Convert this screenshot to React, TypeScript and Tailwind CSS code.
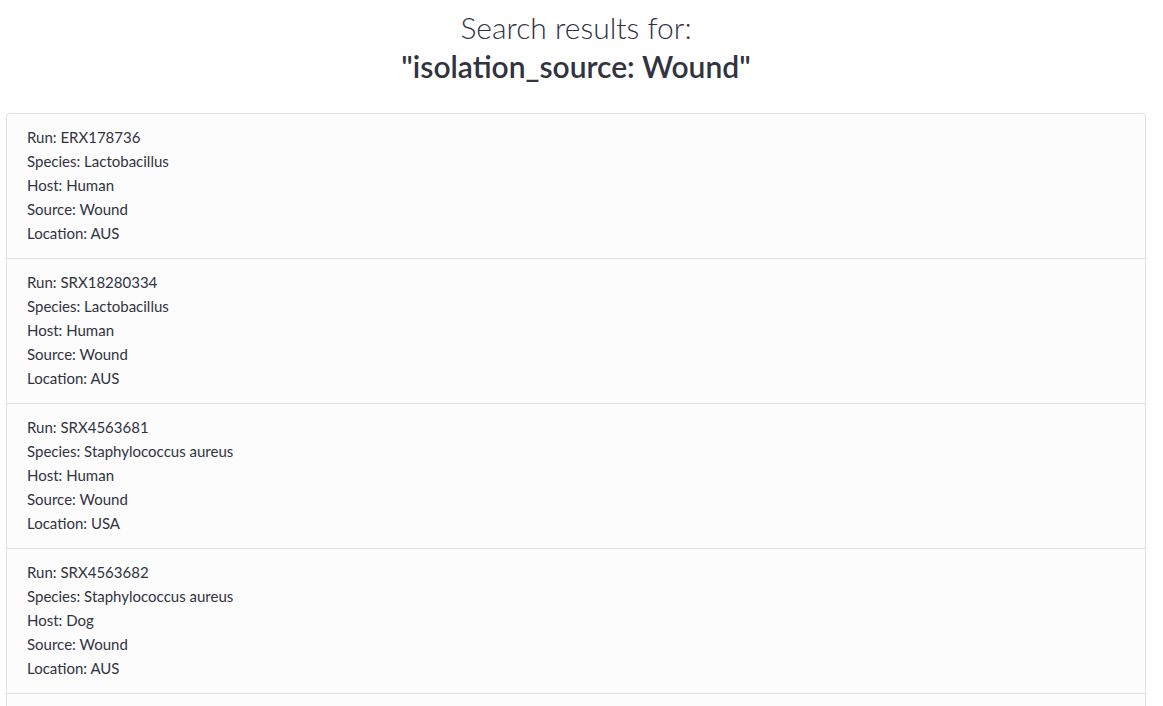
import React from 'react';

const results = [
  { run: 'ERX178736', species: 'Lactobacillus', host: 'Human', source: 'Wound', location: 'AUS' },
  { run: 'SRX18280334', species: 'Lactobacillus', host: 'Human', source: 'Wound', location: 'AUS' },
  { run: 'SRX4563681', species: 'Staphylococcus aureus', host: 'Human', source: 'Wound', location: 'USA' },
  { run: 'SRX4563682', species: 'Staphylococcus aureus', host: 'Dog', source: 'Wound', location: 'AUS' },
  { run: 'SRX4563683', species: 'Staphylococcus aureus', host: 'Human', source: 'Wound', location: 'USA' },
];

export default function App() {
  return (
    <div className="min-h-screen bg-white text-[#31333f]" style={{ fontFamily: 'Lato, "Open Sans", sans-serif' }}>
      <div className="w-[1152px] px-[6px]">
        {/* Header */}
        <div className="pt-[8px] pb-[27px] text-center text-[30px] leading-[39px]">
          <h1 className="font-light">Search results for:</h1>
          <h2 className="font-semibold">"isolation_source: Wound"</h2>
        </div>

        {/* Results */}
        <div className="rounded-t-[4px] border border-[#e0e0e0] bg-[#fcfcfc]">
          {results.map((r) => (
            <div key={r.run} className="h-[145px] border-b border-[#e0e0e0] px-[20px] pt-[11px] text-[15px] leading-[24px]">
              <p>Run: {r.run}</p>
              <p>Species: {r.species}</p>
              <p>Host: {r.host}</p>
              <p>Source: {r.source}</p>
              <p>Location: {r.location}</p>
            </div>
          ))}
        </div>
      </div>
    </div>
  );
}
